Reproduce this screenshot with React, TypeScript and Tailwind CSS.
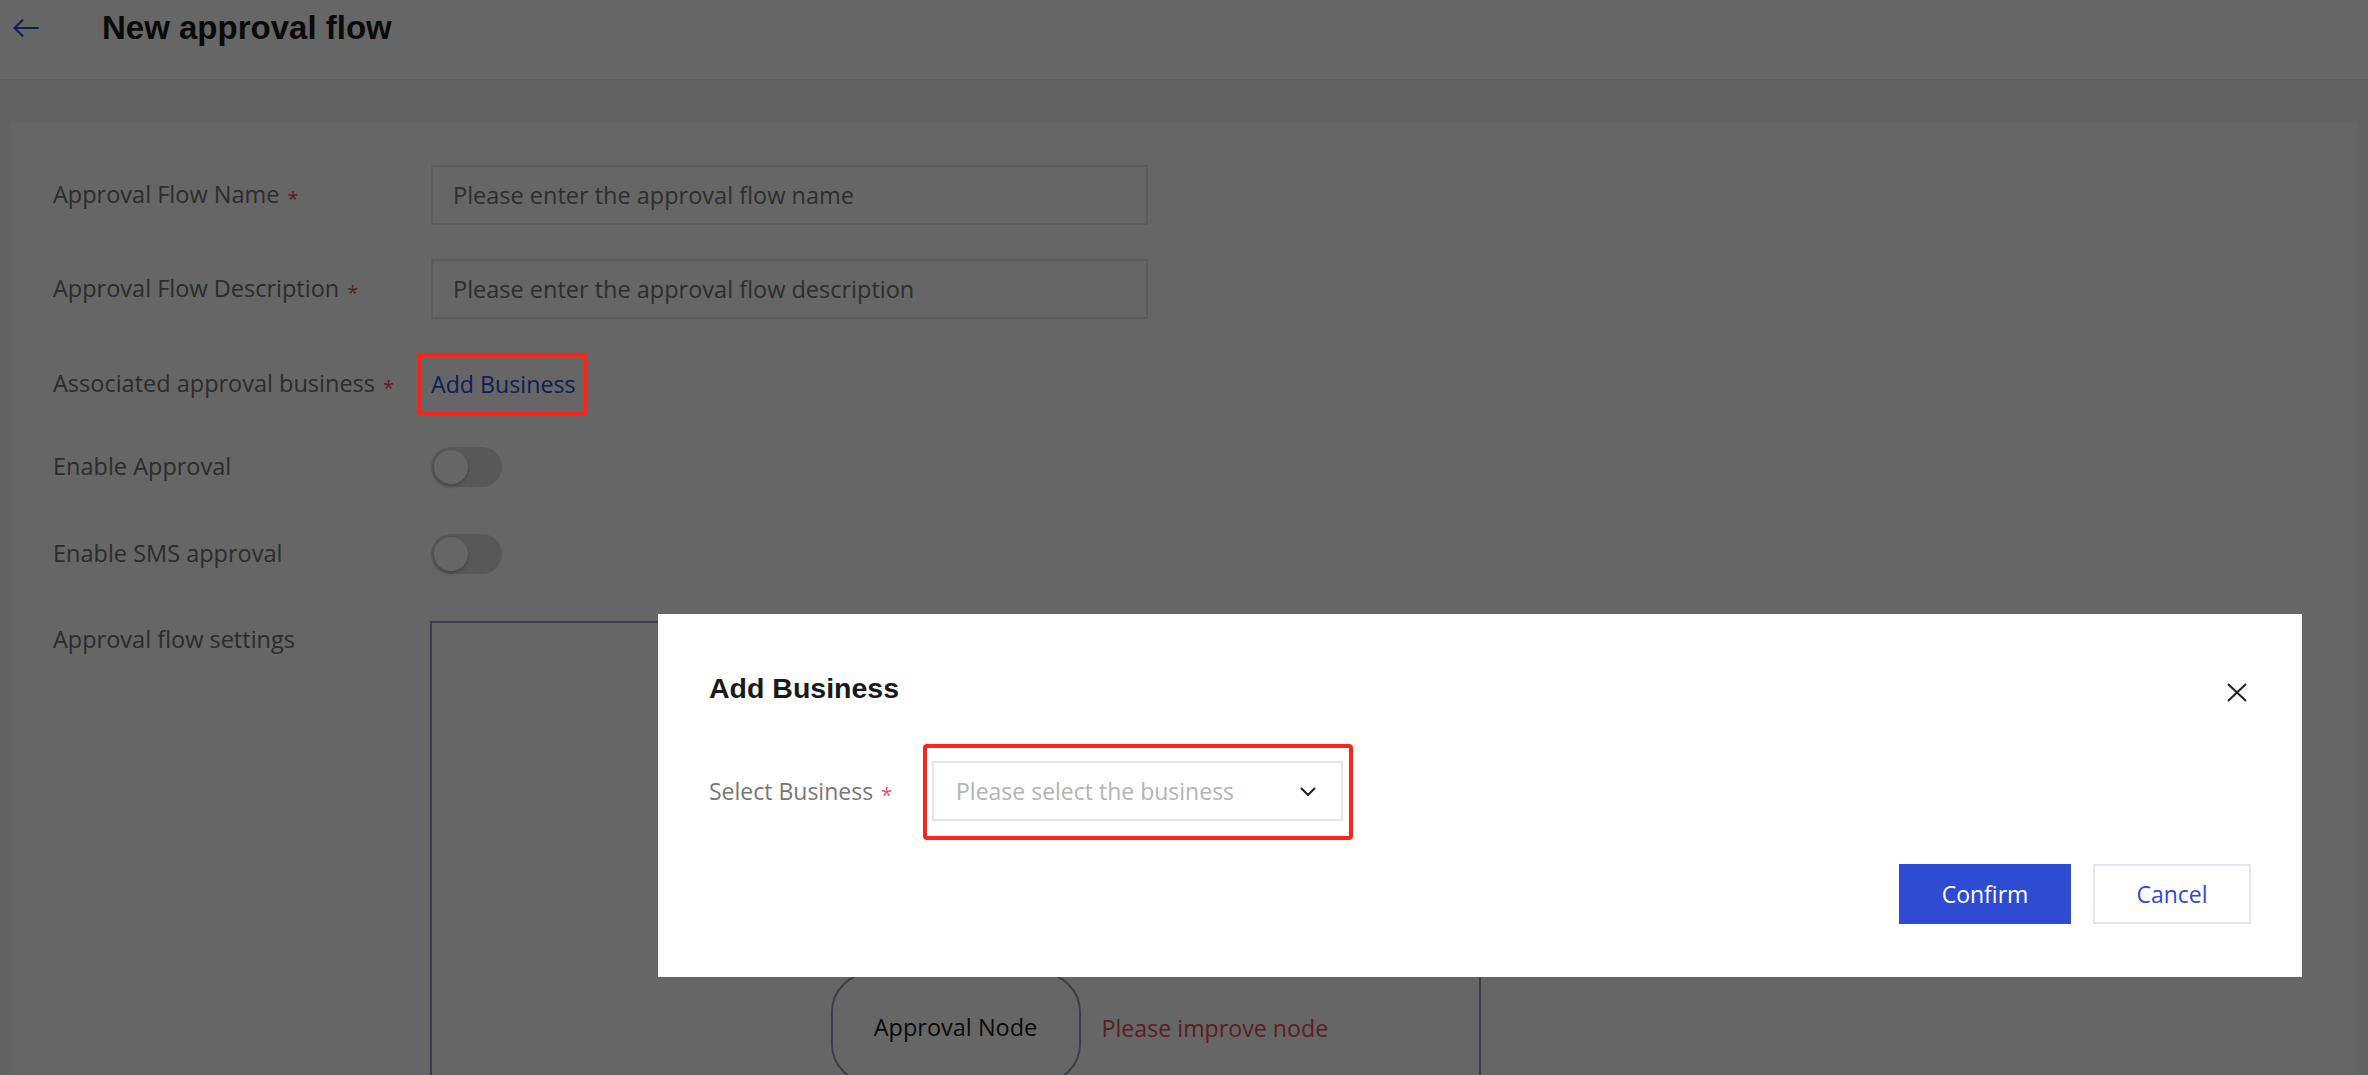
import React from "react";

const BLUE = "#2e4bd3";

function Required() {
  return <span className="relative top-[4px] ml-[8px] text-[20px] leading-none text-[#e34d59]">*</span>;
}

function Toggle() {
  return (
    <div className="relative h-[40px] w-[71px] rounded-full bg-[#dcdde0]">
      <div className="absolute left-[3px] top-[3px] h-[34px] w-[34px] rounded-full bg-white shadow-[0_2px_5px_rgba(0,0,0,0.25)]" />
    </div>
  );
}

function Label({ children, required }: { children: React.ReactNode; required?: boolean }) {
  return (
    <div className="flex w-[378px] shrink-0 items-center text-[23.5px] text-[#6e6e6e]">
      <span>{children}</span>
      {required && <Required />}
    </div>
  );
}

function TextInput({ placeholder }: { placeholder: string }) {
  return (
    <input
      readOnly
      placeholder={placeholder}
      className="h-[60px] w-[717px] border-2 border-[#e6e7eb] bg-white px-[20px] text-[23.5px] text-[#333] outline-none placeholder:text-[#737373]"
    />
  );
}

export default function App() {
  return (
    <div className="relative h-[1075px] w-full overflow-hidden bg-[#f3f5fa] font-['Open_Sans',sans-serif]">
      {/* page header */}
      <header className="h-[80px] border-b border-[#e7e7e9] bg-white">
        <div className="flex h-[56px] items-center">
          <button className="ml-[13px] flex h-[20px] w-[26px] items-center" aria-label="back">
            <svg width="26" height="18" viewBox="0 0 26 18" fill="none" stroke={BLUE} strokeWidth="2" strokeLinecap="round" strokeLinejoin="round">
              <path d="M25 9H1.5" />
              <path d="M9.5 1.2 1.5 9l8 7.8" />
            </svg>
          </button>
          <h1 className="ml-[63px] font-['Liberation_Sans',Arial,sans-serif] text-[33px] font-bold leading-[56px] text-[#1a1a1a]">
            New approval flow
          </h1>
        </div>
      </header>

      {/* form card */}
      <main className="px-[11px] pt-[43px]">
        <div className="h-[1200px] bg-white pl-[42px] pt-[42px]">
          <div className="flex h-[60px] items-center">
            <Label required>Approval Flow Name</Label>
            <TextInput placeholder="Please enter the approval flow name" />
          </div>

          <div className="mt-[34px] flex h-[60px] items-center">
            <Label required>Approval Flow Description</Label>
            <TextInput placeholder="Please enter the approval flow description" />
          </div>

          <div className="mt-[35px] flex h-[60px] items-center">
            <Label required>Associated approval business</Label>
            <div className="relative">
              <a className="cursor-pointer text-[23.2px] text-[#2e4bd3]">Add Business</a>
              <div className="pointer-events-none absolute -left-[14px] -top-[14px] z-50 h-[62px] w-[171px] rounded-[4px] border-4 border-[#fa2419]" />
            </div>
          </div>

          <div className="mt-[33px] flex h-[40px] items-center">
            <Label>Enable Approval</Label>
            <Toggle />
          </div>

          <div className="mt-[47px] flex h-[40px] items-center">
            <Label>Enable SMS approval</Label>
            <Toggle />
          </div>

          <div className="mt-[47px] flex items-start">
            <div className="w-[377px] shrink-0 text-[23.5px] leading-[36px] text-[#6e6e6e]">Approval flow settings</div>
            <div className="relative h-[700px] w-[1051px] border-2 border-[#8d98b0]">
              <div className="absolute left-1/2 top-[349px] -translate-x-1/2">
                <div className="relative flex h-[112px] w-[250px] items-center justify-center rounded-[40px] border-2 border-[#8d98b0] text-[23.5px] text-[#1a1a1a]">
                  Approval Node
                  <span className="absolute left-[269px] whitespace-nowrap text-[23.2px] text-[#e34d59]">Please improve node</span>
                </div>
              </div>
            </div>
          </div>
        </div>
      </main>

      {/* modal backdrop */}
      <div className="fixed inset-0 z-40 bg-black/60" />

      {/* add business dialog */}
      <div className="fixed left-[658px] top-[614px] z-50 w-[1644px] bg-white px-[51px] pb-[53px] pt-[56px]">
        <button className="absolute right-[55px] top-[69px]" aria-label="close">
          <svg width="20" height="19" viewBox="0 0 20 19" fill="none" stroke="#1f1f1f" strokeWidth="2">
            <path d="M1 1l18 17M19 1 1 18" />
          </svg>
        </button>
        <h2 className="font-['Liberation_Sans',Arial,sans-serif] text-[28.5px] font-bold leading-[36px] text-[#1a1a1a]">Add Business</h2>

        <div className="mt-[55px] flex h-[60px] items-center">
          <div className="flex w-[223px] shrink-0 items-center text-[23px] text-[#777]">
            <span>Select Business</span>
            <Required />
          </div>
          <div className="relative flex h-[60px] w-[411px] items-center border-2 border-[#e3e5ea] pl-[22px] text-[23px] text-[#b3b3b3]">
            Please select the business
            <svg className="absolute right-[25px] top-[24px]" width="16" height="10" viewBox="0 0 16 10" fill="none" stroke="#1f1f1f" strokeWidth="2" strokeLinecap="round" strokeLinejoin="round">
              <path d="M1.5 1.5 8 8l6.5-6.5" />
            </svg>
            <div className="pointer-events-none absolute -left-[11px] -top-[19px] h-[96px] w-[430px] rounded-[4px] border-4 border-[#fa2419]" />
          </div>
        </div>

        <div className="mt-[43px] flex justify-end gap-[22px]">
          <button className="h-[60px] w-[172px] bg-[#2e4bd3] text-[23px] text-white">Confirm</button>
          <button className="h-[60px] w-[158px] border-2 border-[#e3e6ee] bg-white text-[23px] text-[#2e4bd3]">Cancel</button>
        </div>
      </div>
    </div>
  );
}
